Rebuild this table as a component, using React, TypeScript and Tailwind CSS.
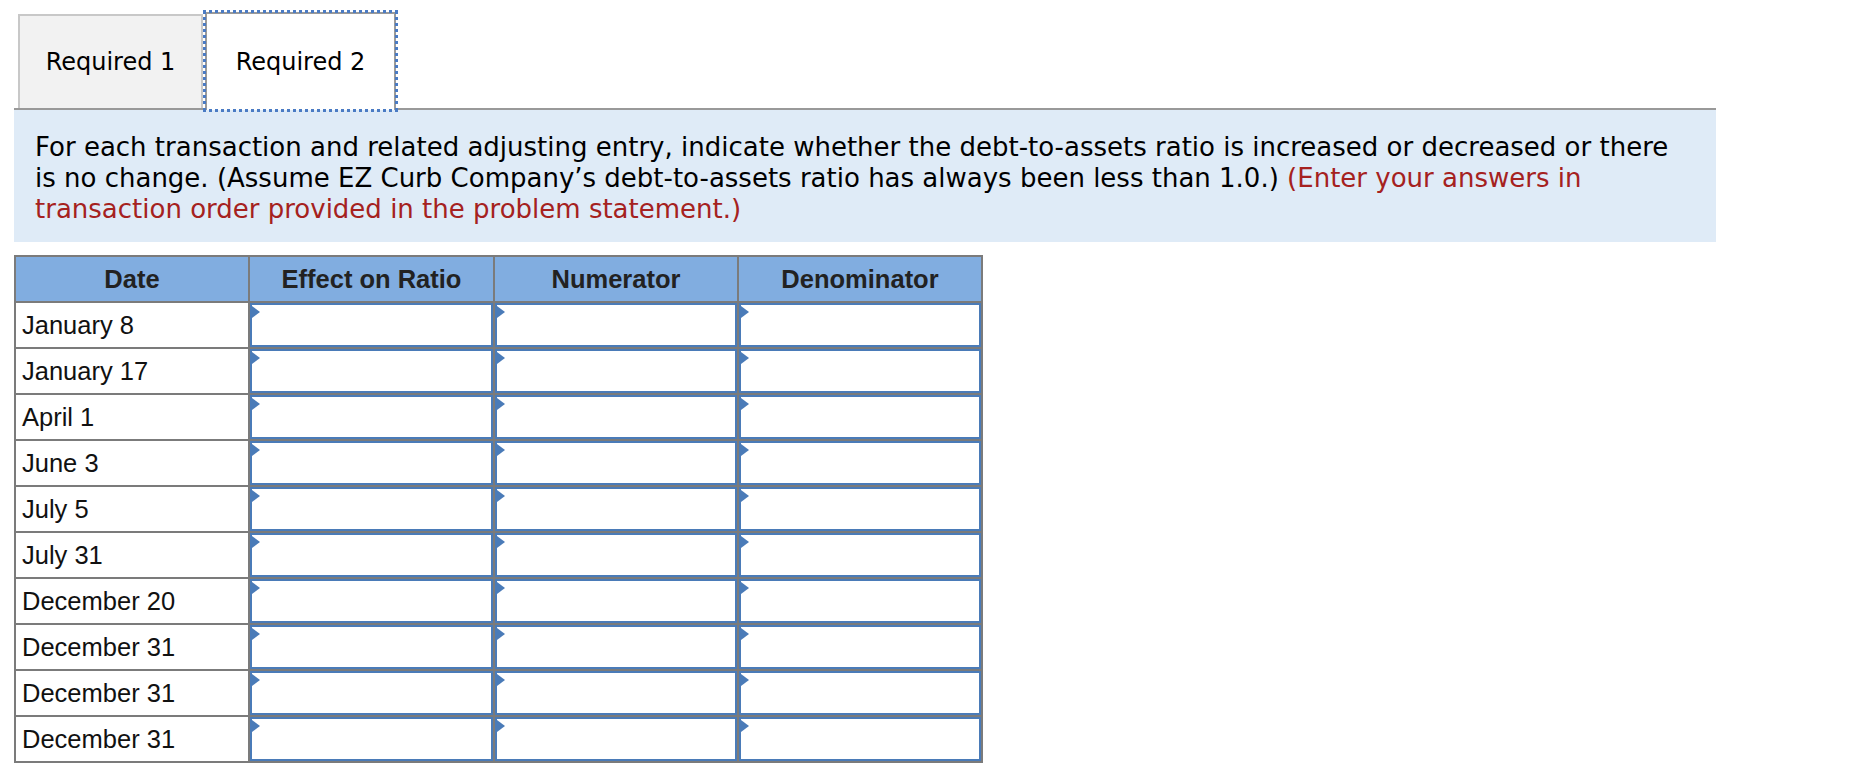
const rows = [
  "January 8",
  "January 17",
  "April 1",
  "June 3",
  "July 5",
  "July 31",
  "December 20",
  "December 31",
  "December 31",
  "December 31",
];

const InputCell = ({ width, last }: { width: string; last?: boolean }) => (
  <div className={`${width} ${last ? "" : "border-r-2 border-[#7b7b7b]"}`}>
    <div className="relative h-full border-2 border-[#4a7bb8] bg-white">
      <span className="absolute left-0 top-px h-0 w-0 border-y-[6px] border-l-[8px] border-y-transparent border-l-[#4a7bb8]" />
    </div>
  </div>
);

const App = () => {
  return (
    <div className="min-h-[770px] w-[1874px] bg-white px-[14px] pt-[12px] font-['DejaVu_Sans',Verdana,sans-serif]">
      {/* tabs */}
      <div className="flex w-[1702px] items-end border-b-2 border-[#999999] pl-[4px]">
        <div className="flex h-[94px] w-[185px] items-center justify-center border-2 border-b-0 border-[#c8c8c8] bg-[#f2f2f2] text-[24px] text-black">
          Required 1
        </div>
        <div className="relative -mb-[2px] ml-[2px] flex h-[98px] w-[191px] items-center justify-center border-2 border-b-0 border-[#9a9a9a] bg-white text-[24px] text-black outline-dotted outline-[3px] outline-offset-[-1px] outline-[#4a7bc4]">
          Required 2
        </div>
      </div>

      {/* instructions */}
      <div className="w-[1702px] bg-[#dfebf7] pb-[17px] pl-[21px] pt-[22px] text-[26px] leading-[31px] text-black">
        For each transaction and related adjusting entry, indicate whether the debt-to-assets ratio is increased or decreased or there
        <br />
        is no change. (Assume EZ Curb Company’s debt-to-assets ratio has always been less than 1.0.){" "}
        <span className="text-[#a52120]">
          (Enter your answers in
          <br />
          transaction order provided in the problem statement.)
        </span>
      </div>

      {/* table */}
      <div className="mt-[13px] w-[969px] border-2 border-[#7b7b7b] font-['Liberation_Sans',Arial,sans-serif] text-[25.5px] text-[#111]">
        <div className="flex h-[44px] bg-[#81ade0] font-bold text-[#222]">
          <div className="flex w-[234px] items-center justify-center border-r-2 border-[#7b7b7b]">Date</div>
          <div className="flex w-[245px] items-center justify-center border-r-2 border-[#7b7b7b]">Effect on Ratio</div>
          <div className="flex w-[244px] items-center justify-center border-r-2 border-[#7b7b7b]">Numerator</div>
          <div className="flex w-[242px] items-center justify-center">Denominator</div>
        </div>
        {rows.map((date, i) => (
          <div key={i} className="flex h-[46px] border-t-2 border-[#7b7b7b]">
            <div className="flex w-[234px] items-center border-r-2 border-[#7b7b7b] pl-[6px]">{date}</div>
            <InputCell width="w-[245px]" />
            <InputCell width="w-[244px]" />
            <InputCell width="w-[242px]" last />
          </div>
        ))}
      </div>
    </div>
  );
};

export default App;
